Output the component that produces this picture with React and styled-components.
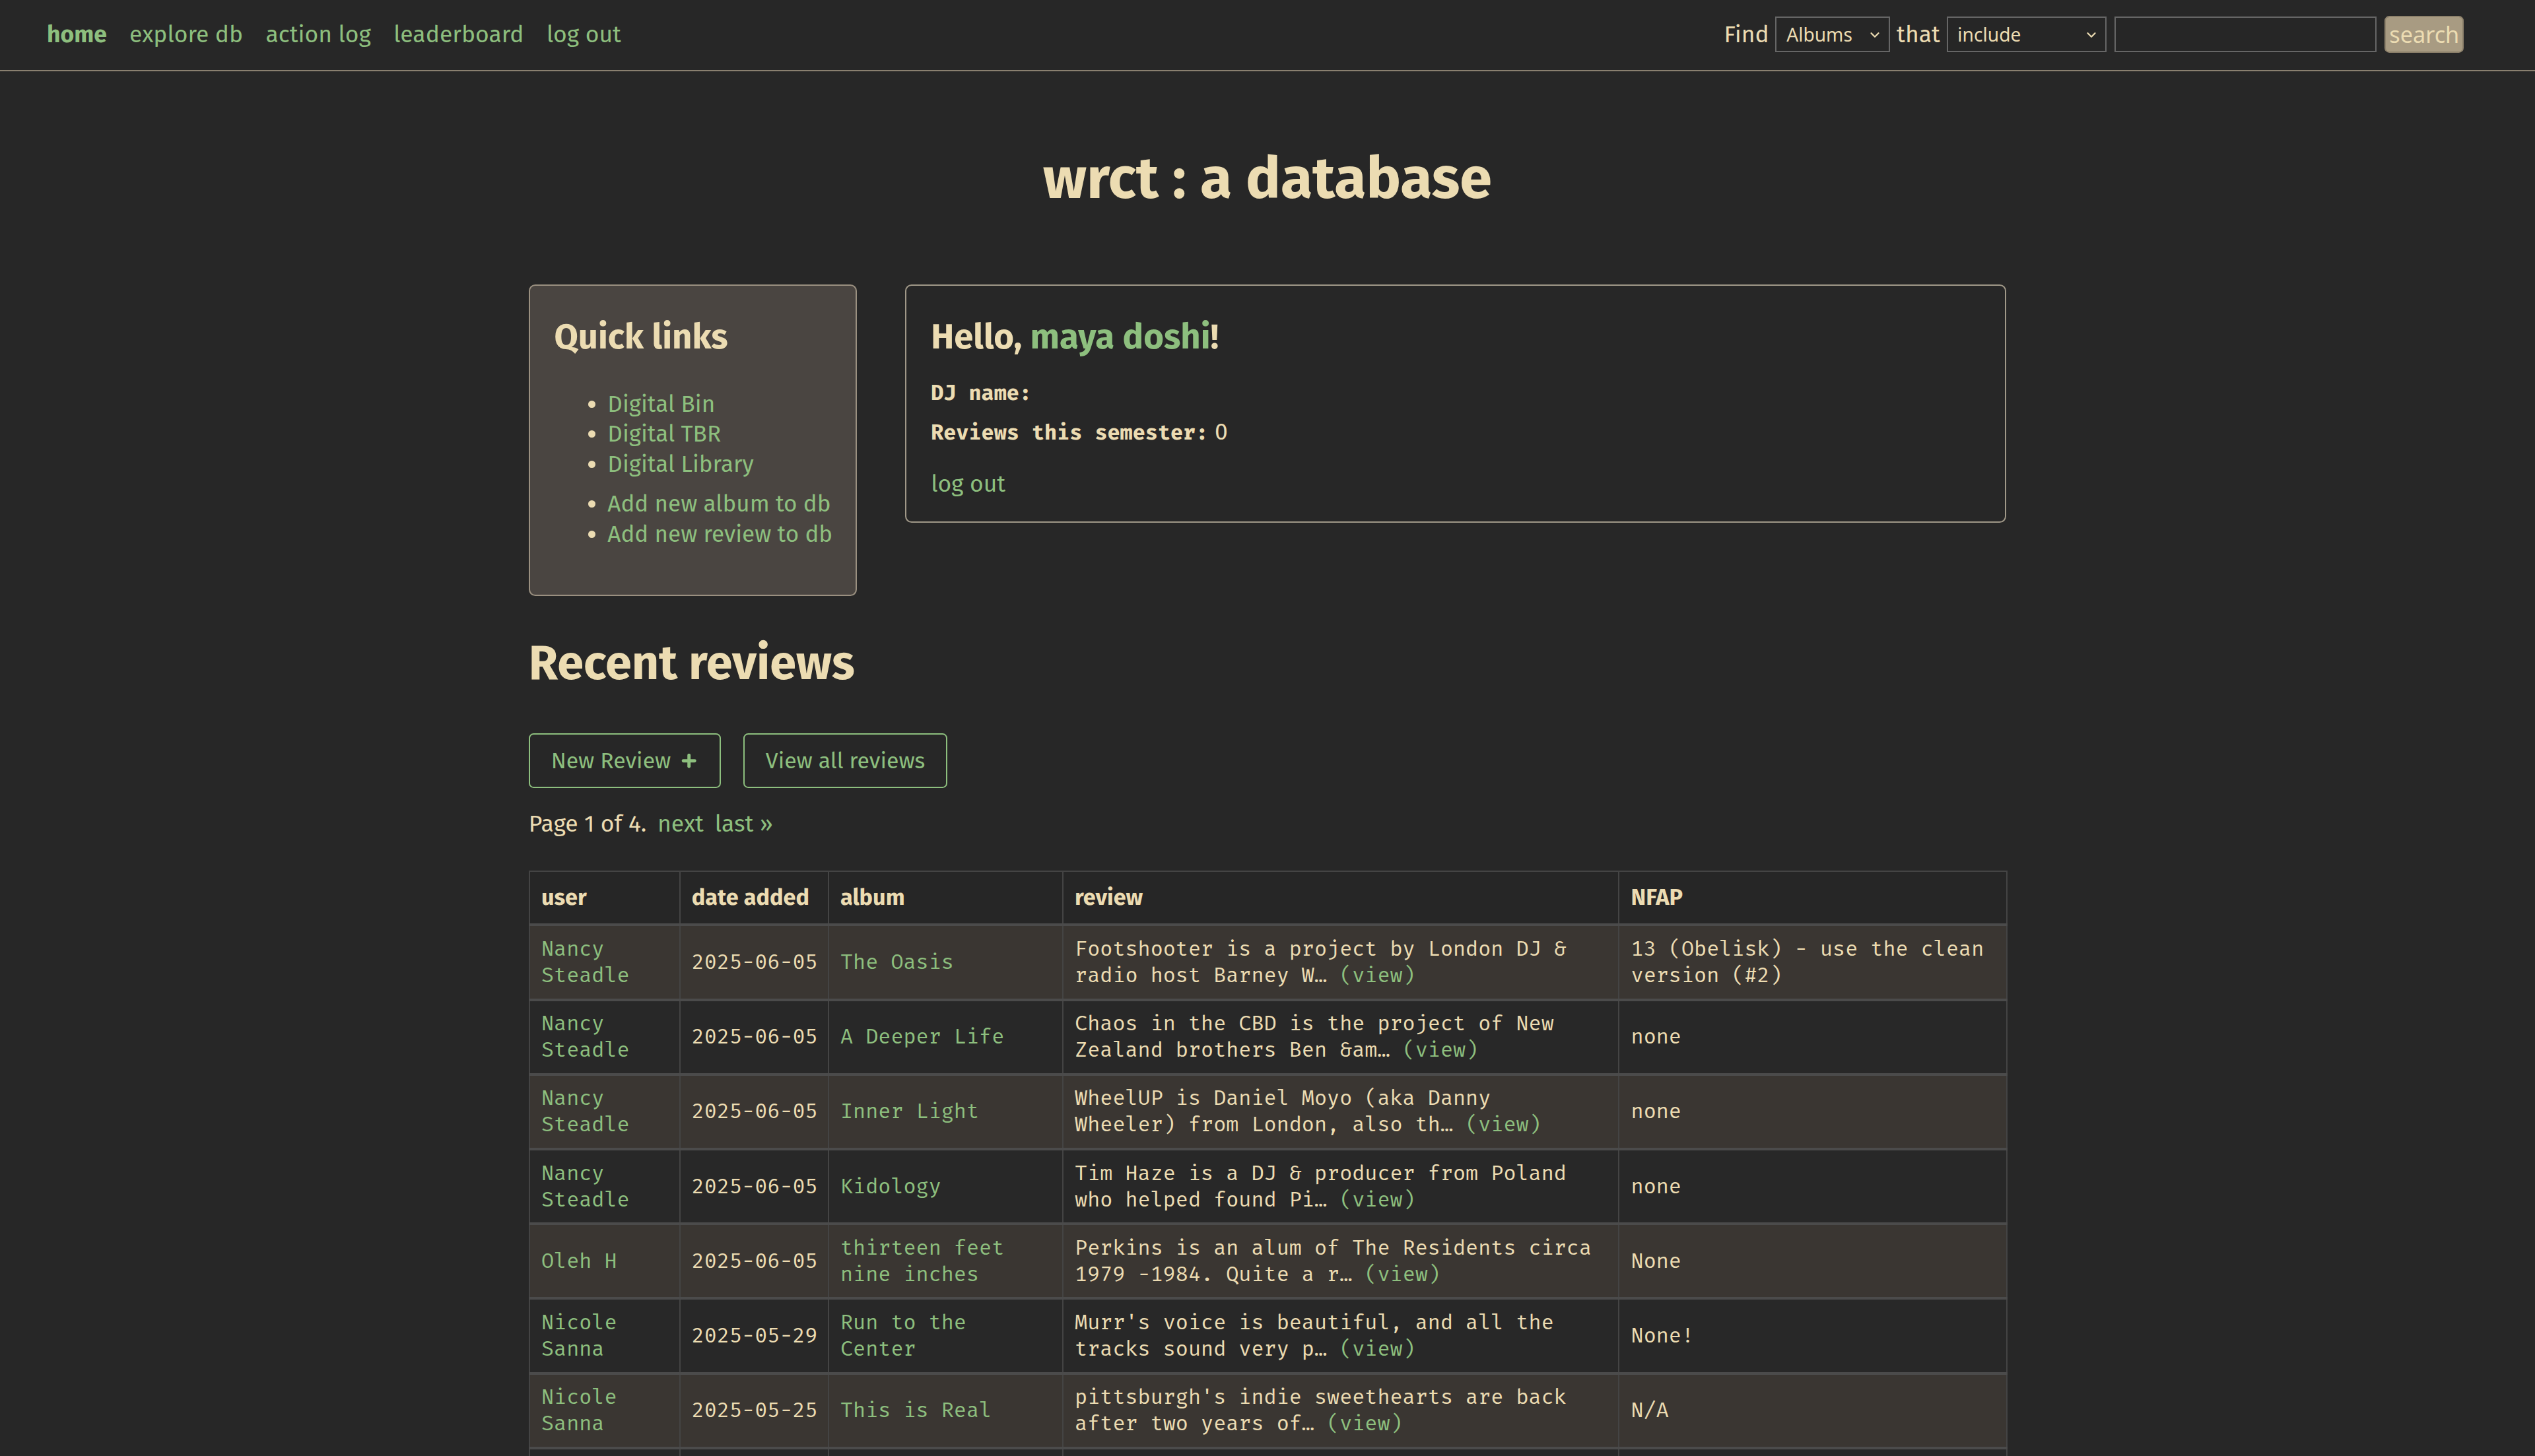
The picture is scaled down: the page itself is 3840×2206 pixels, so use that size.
import React from "react";
import styled, { createGlobalStyle } from "styled-components";
import { ChevronDown, Plus } from "lucide-react";

const cream = "#ecdcb2";
const green = "#8dbf7e";
const sans = `"Fira Sans", "Open Sans", "Noto Sans", sans-serif`;
const mono = `"Fira Mono", "DejaVu Sans Mono", monospace`;

const Global = createGlobalStyle`
  html { zoom: 2.449; background: #272727; }
  body { margin: 0; background: #272727; color: ${cream}; font-family: ${sans}; font-size: 14.5px; }
  a { color: ${green}; text-decoration: none; }
  * { box-sizing: border-box; }
`;

const Nav = styled.nav`
  height: 44px;
  border-bottom: 1px solid #8a8070;
  display: flex;
  align-items: center;
  justify-content: space-between;
  padding: 0 44px 1px 29px;
`;

const NavLinks = styled.div`
  display: flex;
  gap: 14px;
  align-items: center;
`;

const NavLink = styled.a`
  font-size: 14.5px;
  font-weight: ${(p) => (p.$active ? 700 : 400)};
  color: ${green};
`;

const SearchForm = styled.form`
  display: flex;
  align-items: center;
  gap: 4px;
  font-size: 14.5px;
  color: ${cream};
`;

const SelectWrap = styled.span`
  position: relative;
  display: inline-flex;
  width: ${(p) => p.$w}px;
  height: 22px;
`;

const Select = styled.select`
  appearance: none;
  width: 100%;
  height: 100%;
  background: #262626;
  border: 1px solid #666;
  border-radius: 0;
  color: ${cream};
  font-family: "Noto Sans", "Open Sans", sans-serif;
  font-size: 11.5px;
  padding: 0 0 0 6px;
`;

const Chevron = styled(ChevronDown)`
  position: absolute;
  right: 5px;
  top: 7px;
  width: 9px;
  height: 9px;
  color: ${cream};
  pointer-events: none;
`;

const TextInput = styled.input`
  width: 162px;
  height: 22px;
  margin-left: 1px;
  background: #262626;
  border: 1px solid #666;
`;

const SearchButton = styled.button`
  margin-left: 1px;
  width: 49px;
  height: 23px;
  background: #a89b82;
  border: 1px solid #8e826c;
  border-radius: 3px;
  color: ${cream};
  font-family: "Noto Sans", "Open Sans", sans-serif;
  font-size: 14px;
  padding: 0;
`;

const Title = styled.h1`
  text-align: center;
  font-size: 36px;
  line-height: 43px;
  font-weight: 700;
  color: ${cream};
  margin: 45px 0 44px;
`;

const Container = styled.main`
  width: 914px;
  margin: 0 auto;
`;

const TopRow = styled.div`
  display: flex;
  gap: 30px;
  align-items: flex-start;
`;

const Card = styled.section`
  border: 1px solid ${(p) => (p.$filled ? "#9a9080" : "#a09888")};
  background: ${(p) => (p.$filled ? "#4a4541" : "transparent")};
  border-radius: 4px;
  padding: 16px 15px ${(p) => (p.$filled ? "28px" : "13px")};
  width: ${(p) => (p.$w ? `${p.$w}px` : "auto")};
  flex: ${(p) => (p.$w ? "none" : "1")};
`;

const CardTitle = styled.h2`
  margin: 0;
  font-size: 21.5px;
  line-height: 32px;
  font-weight: 700;
  color: ${cream};
`;

const LinkList = styled.ul`
  margin: ${(p) => (p.$first ? "16px" : "6px")} 0 0;
  padding-left: 33px;
  color: ${cream};
  & li { font-size: 14.3px; line-height: 18.6px; white-space: nowrap; }
  & li::marker { color: ${cream}; }
`;

const StatLine = styled.div`
  margin-top: ${(p) => p.$mt}px;
  line-height: 20px;
  font-size: 14.5px;
`;

const StatLabel = styled.span`
  font-family: ${mono};
  font-weight: 700;
  font-size: 13px;
  margin-right: 4px;
`;

const SectionTitle = styled.h1`
  margin: 24px 0 25px;
  font-size: 29.4px;
  line-height: 36px;
  font-weight: 700;
  color: ${cream};
`;

const ButtonRow = styled.div`
  display: flex;
  gap: 14px;
`;

const OutlineButton = styled.a`
  display: inline-flex;
  align-items: center;
  gap: 5px;
  height: 34px;
  padding: 0 13px;
  border: 1px solid ${green};
  border-radius: 3px;
  font-size: 13.8px;
  color: ${green};
`;

const Pager = styled.p`
  margin: 13px 0 20px;
  font-size: 14.5px;
  line-height: 18px;
  & a { margin-left: 3px; }
`;

const Table = styled.table`
  width: 914px;
  border-collapse: collapse;
  table-layout: fixed;
  border: 1px solid #444;
`;

const Th = styled.th`
  width: ${(p) => p.$w}px;
  text-align: left;
  font-family: ${sans};
  font-size: 14px;
  font-weight: 700;
  line-height: 18px;
  padding: 7px 7px;
  background: #262626;
  border-left: 1px solid #444;
  color: ${cream};
`;

const Tr = styled.tr`
  background: ${(p) => (p.$odd ? "#3a3632" : "#282828")};
  border-top: 2px solid #4b4b4b;
`;

const Td = styled.td`
  font-family: ${mono};
  font-size: 13px;
  line-height: 16.3px;
  padding: 6px 9px 6px 7px;
  vertical-align: middle;
  border-left: 1px solid #444;
  color: ${cream};
  overflow-wrap: break-word;
  white-space: ${(p) => (p.$nowrap ? "nowrap" : "normal")};
`;

const rows = [
  ["Nancy Steadle", "2025-06-05", "The Oasis", "Footshooter is a project by London DJ & radio host Barney W…", "13 (Obelisk) - use the clean version (#2)"],
  ["Nancy Steadle", "2025-06-05", "A Deeper Life", "Chaos in the CBD is the project of New Zealand brothers Ben &am…", "none"],
  ["Nancy Steadle", "2025-06-05", "Inner Light", "WheelUP is Daniel Moyo (aka Danny Wheeler) from London, also th…", "none"],
  ["Nancy Steadle", "2025-06-05", "Kidology", "Tim Haze is a DJ & producer from Poland who helped found Pi…", "none"],
  ["Oleh H", "2025-06-05", "thirteen feet nine inches", "Perkins is an alum of The Residents circa 1979 -1984. Quite a r…", "None"],
  ["Nicole Sanna", "2025-05-29", "Run to the Center", "Murr's voice is beautiful, and all the tracks sound very p…", "None!"],
  ["Nicole Sanna", "2025-05-25", "This is Real", "pittsburgh's indie sweethearts are back after two years of…", "N/A"],
  ["Nicole Sanna", "2025-05-20", "Lost Signals", "A bright, warm record full of jangly guitars and hushed voc…", "none"],
  ["Oleh H", "2025-05-18", "Night Shift", "Dubby minimal techno from a Berlin producer with a knack fo…", "none"],
  ["Nancy Steadle", "2025-05-12", "Afterglow", "Lush ambient textures built from field recordings made ac…", "None"],
];

export default function App() {
  return (
    <>
      <Global />
      <Nav>
        <NavLinks>
          <NavLink $active href="#">home</NavLink>
          <NavLink href="#">explore db</NavLink>
          <NavLink href="#">action log</NavLink>
          <NavLink href="#">leaderboard</NavLink>
          <NavLink href="#">log out</NavLink>
        </NavLinks>
        <SearchForm onSubmit={(e) => e.preventDefault()}>
          <span>Find</span>
          <SelectWrap $w={71}>
            <Select defaultValue="Albums">
              <option>Albums</option>
              <option>Artists</option>
              <option>Reviews</option>
            </Select>
            <Chevron strokeWidth={2.5} />
          </SelectWrap>
          <span>that</span>
          <SelectWrap $w={99}>
            <Select defaultValue="include">
              <option>include</option>
              <option>start with</option>
              <option>match</option>
            </Select>
            <Chevron strokeWidth={2.5} />
          </SelectWrap>
          <TextInput type="text" />
          <SearchButton type="submit">search</SearchButton>
        </SearchForm>
      </Nav>

      <Title>wrct : a database</Title>

      <Container>
        <TopRow>
          <Card $filled $w={203}>
            <CardTitle>Quick links</CardTitle>
            <LinkList $first>
              <li><a href="#">Digital Bin</a></li>
              <li><a href="#">Digital TBR</a></li>
              <li><a href="#">Digital Library</a></li>
            </LinkList>
            <LinkList>
              <li><a href="#">Add new album to db</a></li>
              <li><a href="#">Add new review to db</a></li>
            </LinkList>
          </Card>
          <Card>
            <CardTitle>
              Hello, <a href="#">maya doshi</a>!
            </CardTitle>
            <StatLine $mt={8}>
              <StatLabel>DJ name:</StatLabel>
            </StatLine>
            <StatLine $mt={4}>
              <StatLabel>Reviews this semester:</StatLabel>0
            </StatLine>
            <StatLine $mt={12}>
              <a href="#">log out</a>
            </StatLine>
          </Card>
        </TopRow>

        <SectionTitle>Recent reviews</SectionTitle>
        <ButtonRow>
          <OutlineButton href="#">
            New Review <Plus size={12} strokeWidth={4} />
          </OutlineButton>
          <OutlineButton href="#">View all reviews</OutlineButton>
        </ButtonRow>
        <Pager>
          Page 1 of 4. <a href="#">next</a> <a href="#">last »</a>
        </Pager>

        <Table>
          <thead>
            <tr>
              <Th $w={93}>user</Th>
              <Th $w={92}>date added</Th>
              <Th $w={145}>album</Th>
              <Th $w={344}>review</Th>
              <Th $w={240}>NFAP</Th>
            </tr>
          </thead>
          <tbody>
            {rows.map((r, i) => (
              <Tr key={i} $odd={i % 2 === 0}>
                <Td><a href="#">{r[0]}</a></Td>
                <Td $nowrap>{r[1]}</Td>
                <Td><a href="#">{r[2]}</a></Td>
                <Td>
                  {r[3]} <a href="#">(view)</a>
                </Td>
                <Td>{r[4]}</Td>
              </Tr>
            ))}
          </tbody>
        </Table>
      </Container>
    </>
  );
}
